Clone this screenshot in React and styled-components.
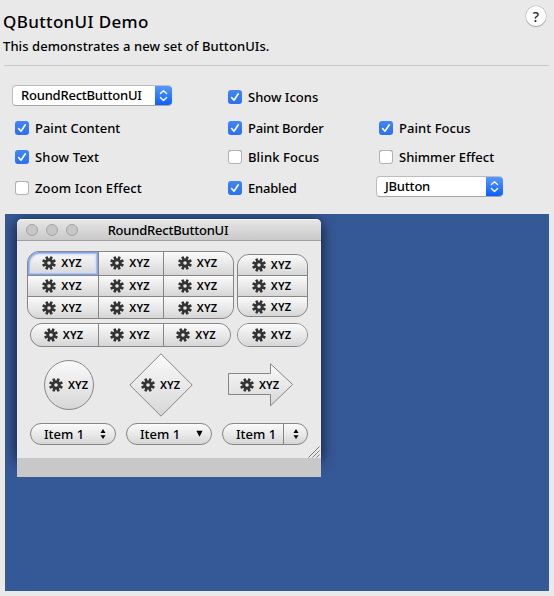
import React from "react";
import styled, { createGlobalStyle, css } from "styled-components";

const Global = createGlobalStyle`
  * { box-sizing: border-box; }
  body { margin: 0; background: #e9e9e9; color: #000; }
`;

const font = css`
  font-family: "Noto Sans", "Open Sans", sans-serif;
  font-weight: 500;
  white-space: nowrap;
`;

const Page = styled.main`
  ${font}
  width: 554px;
  height: 596px;
  overflow: hidden;
  padding: 6px 5px 5px 4px;
  background: #e9e9e9;
  font-size: 13px;
`;

const Header = styled.header`
  display: flex;
  justify-content: space-between;
  height: 60px;
  padding-right: 3px;
  border-bottom: 1px solid #c8c8c8;
`;

const Title = styled.h1`
  margin: 4px 0 0 -1px;
  font-size: 17px;
  font-weight: 500;
  line-height: 24px;
  letter-spacing: 0.35px;
`;

const Subtitle = styled.p`
  margin: 3px 0 0 -1px;
  line-height: 18px;
  letter-spacing: 0.07px;
`;

const Help = styled.button`
  width: 20px;
  height: 20px;
  padding: 0;
  border: 0;
  border-radius: 50%;
  background: #fff;
  box-shadow: 0 0 0 0.5px #b4b4b4, 0 1px 1px #999;
  font: 500 14px/21px "Noto Sans", sans-serif;
  color: #222;
`;

const Controls = styled.section`
  display: grid;
  grid-template-columns: 213px 151px 1fr;
  grid-template-rows: 34px 28px 30px 32px;
  align-items: center;
  padding: 14px 0 0 11px;
`;

const Check = styled.label`
  display: flex;
  align-items: center;
  height: 14px;
  line-height: 14px;
  letter-spacing: ${(p) => p.$ls || 0}px;
`;

const Box = styled.span`
  display: flex;
  width: 14px;
  height: 14px;
  margin-right: 6px;
  border-radius: 3px;
  background: ${(p) => (p.$on ? "linear-gradient(#4285f5, #2a70f0)" : "#fff")};
  box-shadow: ${(p) => (p.$on ? "none" : "inset 0 0 0 1px #b3b3b3, inset 0 1px 0 #a0a0a0")};
`;

const Combo = styled.div`
  display: flex;
  align-items: center;
  justify-content: space-between;
  width: ${(p) => p.$w}px;
  height: 21px;
  margin: -3px 0 0 -3px;
  padding-left: 8px;
  border-radius: 4px;
  overflow: hidden;
  background: #fff;
  border: 1px solid #bdbdbd;
  border-right: 0;
  border-bottom-color: #a5a5a5;
  line-height: 19px;
  letter-spacing: ${(p) => p.$ls || 0}px;
`;

const ComboArrow = styled.span`
  display: flex;
  align-items: center;
  justify-content: center;
  width: 17px;
  height: 21px;
  margin: -1px 0;
  background: linear-gradient(#5a9bfa, #0a5cfb);
`;

const Desktop = styled.section`
  width: 544px;
  height: 377px;
  margin: 10px 0 0 1px;
  padding: 5px 12px;
  background: #355896;
  overflow: hidden;
`;

const Frame = styled.div`
  width: 304px;
  height: 239px;
  border-radius: 5px 5px 0 0;
  background: #e9e9e9;
  box-shadow: 0 3px 14px rgba(0, 0, 0, 0.75);
`;

const TitleBar = styled.div`
  display: grid;
  grid-template-columns: 1fr auto 1fr;
  align-items: center;
  height: 22px;
  padding-right: 2px;
  border-radius: 5px 5px 0 0;
  border-top: 1px solid #f5f5f5;
  border-bottom: 1px solid #a0a0a0;
  background: linear-gradient(#e6e6e6, #c9c9c9);
  line-height: 20px;
  letter-spacing: -0.22px;
`;

const Lights = styled.div`
  display: flex;
  gap: 8px;
  padding-left: 9px;
`;

const Light = styled.i`
  width: 12px;
  height: 12px;
  border-radius: 50%;
  background: #c6c6c6;
  border: 1px solid #a5a5a5;
`;

const Body = styled.div`
  height: 217px;
  padding: 10px 0 0 10px;
`;

const Line = styled.div`
  display: flex;
  align-items: ${(p) => p.$align || "center"};
  height: ${(p) => p.$h}px;
  margin-top: ${(p) => p.$top || 0}px;
  padding-left: ${(p) => p.$left || 0}px;
  gap: ${(p) => p.$gap}px;
`;

const Group = styled.div`
  display: grid;
  grid-template-columns: ${(p) => p.$cols};
  grid-template-rows: ${(p) => p.$rows};
  gap: 1px;
  border: 1px solid #868686;
  border-radius: ${(p) => p.$r}px;
  background: #868686;
  overflow: hidden;
`;

const face = "linear-gradient(#fafafa, #e9e9e9 50%, #d6d6d6)";

const Cell = styled.button`
  ${font}
  display: flex;
  align-items: center;
  justify-content: center;
  padding: 0 2px ${(p) => (p.$raised ? 1 : 0)}px 0;
  border: 0;
  border-radius: ${(p) => (p.$focus ? "11px 0 0 0" : "0")};
  background: ${face};
  box-shadow: ${(p) => (p.$focus ? "inset 0 0 0 1px #86a3e6, inset 0 0 0 2px #a9bfee, inset 0 0 2px 3px #d3dcf2" : "none")};
  color: #000;
`;

const Face = styled.span`
  ${font}
  display: flex;
  align-items: center;
  gap: 5px;
  font-size: 11px;
  font-weight: 600;
  line-height: 14px;
  letter-spacing: 0.1px;
`;

const ShapeButton = styled.button`
  display: grid;
  place-items: center start;
  width: ${(p) => p.$w}px;
  height: ${(p) => p.$h}px;
  padding: 0;
  border: 0;
  background: none;
  color: #000;
  > * { grid-area: 1 / 1; }
  > span { margin-left: ${(p) => p.$inset}px; }
`;

const Pill = styled.div`
  display: flex;
  align-items: center;
  justify-content: space-between;
  width: 86px;
  height: 22px;
  padding-left: 13px;
  border: 1px solid #868686;
  border-radius: 11px;
  background: ${face};
  line-height: 20px;
`;

const PillEnd = styled.span`
  display: flex;
  align-items: center;
  justify-content: center;
  width: 24px;
  height: 20px;
  padding-bottom: 1px;
  border-left: ${(p) => (p.$split ? "1px solid #868686" : "0")};
`;

const GripRow = styled.div`
  display: flex;
  justify-content: flex-end;
  margin-top: 1px;
  height: 12px;
  padding-right: 1px;
`;

const Strip = styled.div`
  position: relative;
  width: 304px;
  height: 19px;
  background: #c8c8c8;
`;

const Tick = () => (
  <svg width="14" height="14" viewBox="0 0 14 14">
    <path d="M3.6 7.5 6 10.2 10.3 3.8" fill="none" stroke="#fff" strokeWidth="1.6" strokeLinecap="round" strokeLinejoin="round" />
  </svg>
);

const Chevrons = () => (
  <svg width="9" height="13" viewBox="0 0 9 13">
    <path d="M1.4 4.6 4.5 1.7 7.6 4.6M1.4 8.6 4.5 11.5 7.6 8.6" fill="none" stroke="#fff" strokeWidth="1.4" strokeLinecap="round" strokeLinejoin="round" />
  </svg>
);

const Gear = () => (
  <svg width="14" height="14" viewBox="-7 -7 14 14">
    {[22.5, 67.5, 112.5, 157.5].map((a) => (
      <rect key={a} x="-1.3" y="-6.9" width="2.6" height="13.8" rx=".3" fill="#333" transform={`rotate(${a})`} />
    ))}
    <circle r="4.5" fill="#333" />
    <circle r="1.8" fill="#e9e9e9" />
  </svg>
);

const UpDown = () => (
  <svg width="6" height="10" viewBox="0 0 6 10">
    <path d="M3 0 5.5 4H.5ZM3 10 5.5 6.2H.5Z" fill="#000" />
  </svg>
);

const Down = () => (
  <svg width="7" height="7" viewBox="0 0 7 7">
    <path d="M.4.7H6.6L3.5 6.8Z" fill="#000" />
  </svg>
);

const Content = () => (
  <Face>
    <Gear />
    XYZ
  </Face>
);

const Shape = ({ w, h, inset, id, d }) => (
  <ShapeButton $w={w} $h={h} $inset={inset}>
    <svg width={w} height={h}>
      <defs>
        <linearGradient id={id} x1="0" y1="0" x2="0" y2="1">
          <stop offset="0" stopColor="#fafafa" />
          <stop offset=".5" stopColor="#e9e9e9" />
          <stop offset="1" stopColor="#d6d6d6" />
        </linearGradient>
      </defs>
      <path d={d} fill={`url(#${id})`} stroke="#868686" />
    </svg>
    <Content />
  </ShapeButton>
);

const Option = ({ on, ls, children }) => (
  <Check $ls={ls}>
    <Box $on={on}>{on && <Tick />}</Box>
    {children}
  </Check>
);

const Buttons = ({ count, focusFirst, raised = 0, ...rest }) => (
  <Group {...rest}>
    {Array.from({ length: count }, (_, i) => (
      <Cell key={i} $focus={focusFirst && i === 0} $raised={i < raised}>
        <Content />
      </Cell>
    ))}
  </Group>
);

export default function App() {
  return (
    <Page>
      <Global />
      <Header>
        <div>
          <Title>QButtonUI Demo</Title>
          <Subtitle>This demonstrates a new set of ButtonUIs.</Subtitle>
        </div>
        <Help>?</Help>
      </Header>
      <Controls>
        <Combo $w={160} $ls={-0.22}>
          RoundRectButtonUI
          <ComboArrow><Chevrons /></ComboArrow>
        </Combo>
        <Option on>Show Icons</Option>
        <span />
        <Option on>Paint Content</Option>
        <Option on ls={-0.22}>Paint Border</Option>
        <Option on ls={0.05}>Paint Focus</Option>
        <Option on ls={0.2}>Show Text</Option>
        <Option ls={0.12}>Blink Focus</Option>
        <Option>Shimmer Effect</Option>
        <Option ls={0.13}>Zoom Icon Effect</Option>
        <Option on ls={-0.2}>Enabled</Option>
        <Combo $w={127} $ls={-0.2}>
          JButton
          <ComboArrow><Chevrons /></ComboArrow>
        </Combo>
      </Controls>
      <Desktop>
        <Frame>
          <TitleBar>
            <Lights><Light /><Light /><Light /></Lights>
            RoundRectButtonUI
            <span />
          </TitleBar>
          <Body>
            <Line $h={68} $gap={3} $align="flex-start">
              <Buttons count={9} focusFirst raised={3} $cols="70px 64px 69px" $rows="23px 20px 21px" $r={12} />
              <Line $h={68} $top={3} $gap={0} $align="flex-start">
                <Buttons count={3} $cols="69px" $rows="20px 20px 19px" $r={12} />
              </Line>
            </Line>
            <Line $h={24} $top={4} $left={3} $gap={6}>
              <Buttons count={3} $cols="67px 64px 66px" $rows="22px" $r={12} />
              <Buttons count={1} $cols="69px" $rows="22px" $r={12} />
            </Line>
            <Line $h={64} $top={6} $left={17} $gap={35}>
              <Shape id="circle" w={50} h={50} inset={5} d="M25 .5A24.5 24.5 0 0 1 25 49.5A24.5 24.5 0 0 1 25 .5Z" />
              <Shape id="diamond" w={64} h={64} inset={12} d="M32 .8 63.2 32 32 63.2.8 32Z" />
              <Shape id="arrow" w={66} h={44} inset={12} d="M.5 10.5H42.5V.8L64.6 21.5 42.5 42.8V31.5H.5Z" />
            </Line>
            <Line $h={22} $top={6} $left={3} $gap={10}>
              <Pill>Item 1<PillEnd><UpDown /></PillEnd></Pill>
              <Pill>Item 1<PillEnd><Down /></PillEnd></Pill>
              <Pill>Item 1<PillEnd $split><UpDown /></PillEnd></Pill>
            </Line>
            <GripRow>
              <svg width="12" height="12" viewBox="0 0 12 12">
                <path d="M.5 11.5 11.5 .5M4.5 11.5 11.5 4.5M8.5 11.5 11.5 8.5" stroke="#777" fill="none" />
              </svg>
            </GripRow>
          </Body>
        </Frame>
        <Strip />
      </Desktop>
    </Page>
  );
}
